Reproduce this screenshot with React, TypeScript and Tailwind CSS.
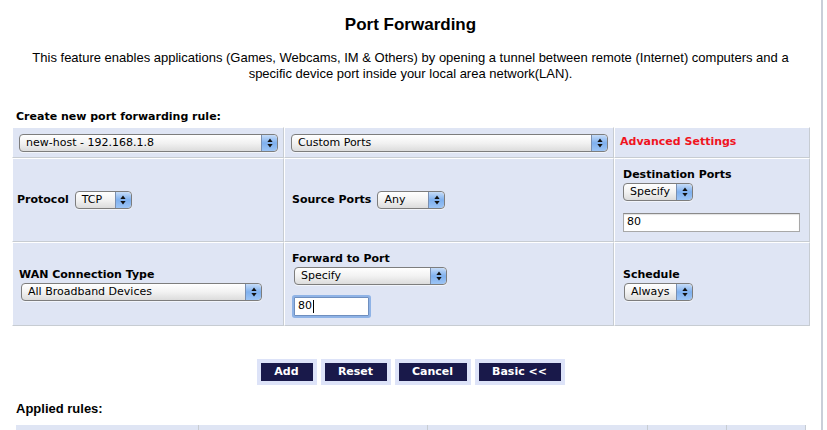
import type { ReactNode } from "react";

const label = "font-['DejaVu_Sans',sans-serif] text-[11px] font-bold text-black";

function Arrows() {
  return (
    <div className="flex h-full w-[16px] shrink-0 items-center justify-center rounded-r-[4px] border-l border-[#7a8fb0] bg-gradient-to-b from-[#c6dcf8] via-[#7fb0ee] to-[#9cc4f5]">
      <svg width="6" height="10" viewBox="0 0 6 10">
        <path d="M3 0.5 L5.6 4 H0.4 Z" fill="#111" />
        <path d="M3 9.5 L5.6 6 H0.4 Z" fill="#111" />
      </svg>
    </div>
  );
}

function Select({ value, w }: { value: string; w: string }) {
  return (
    <div
      className={`flex h-[18px] ${w} items-stretch overflow-hidden rounded-[4px] border border-[#7d7d7d] bg-gradient-to-b from-white via-[#f2f2f2] to-[#dcdcdc] shadow-[0_1px_0_rgba(255,255,255,0.6)]`}
    >
      <div className="flex-1 truncate pl-[6px] font-['DejaVu_Sans',sans-serif] text-[11px] leading-[16px] text-black">
        {value}
      </div>
      <Arrows />
    </div>
  );
}

function Input({ value, w, focus }: { value: string; w: string; focus?: boolean }) {
  return (
    <div
      className={[
        "flex h-[19px] items-center border bg-white pl-[3px] font-['DejaVu_Sans',sans-serif] text-[11px] text-black",
        w,
        focus
          ? "border-[#6f8fbf] shadow-[0_0_0_2px_#8fb3e6] rounded-[1px]"
          : "border-[#a8a8a8] border-t-[#8a8a8a] shadow-[inset_0_1px_1px_rgba(0,0,0,0.12)]",
      ].join(" ")}
    >
      {value}
      {focus && <span className="ml-px h-[13px] w-px bg-black" />}
    </div>
  );
}

function Cell({ children, className = "" }: { children?: ReactNode; className?: string }) {
  return (
    <div
      className={`flex flex-col justify-center border border-b-[#c7ccd2] border-r-[#c7ccd2] border-t-white border-l-white bg-[#dfe5f4] ${className}`}
    >
      {children}
    </div>
  );
}

function Btn({ children, w }: { children: ReactNode; w: string }) {
  return (
    <div className="border-4 border-[#dde3f8] bg-[#dde3f8]">
      <div
        className={`flex h-[18px] ${w} items-center justify-center bg-[#19194a] font-['DejaVu_Sans',sans-serif] text-[11px] font-bold text-white`}
      >
        {children}
      </div>
    </div>
  );
}

export default function App() {
  return (
    <div className="flex h-[430px] w-[827px] overflow-hidden bg-white">
      <div className="w-[821px] shrink-0">
        {/* header */}
        <div className="pt-[14px] text-center font-['Liberation_Sans',sans-serif] text-[17px] font-bold leading-[21px] text-black">
          Port Forwarding
        </div>
        <div className="mt-[15px] text-center font-['Liberation_Sans',sans-serif] text-[13px] leading-[16px] text-black">
          This feature enables applications (Games, Webcams, IM &amp; Others) by opening a tunnel between remote (Internet) computers and a
          <br />
          specific device port inside your local area network(LAN).
        </div>

        <div className={`mt-[28px] pl-[16px] leading-[14px] ${label}`}>Create new port forwarding rule:</div>

        {/* rule table */}
        <div className="ml-[12px] mt-[3px] grid w-[798px] grid-cols-[272px_330px_196px] grid-rows-[31px_84px_84px]">
          <Cell className="pl-[6px]">
            <Select value="new-host - 192.168.1.8" w="w-[259px]" />
          </Cell>
          <Cell className="pl-[6px]">
            <Select value="Custom Ports" w="w-[317px]" />
          </Cell>
          <Cell className="pl-[5px]">
            <span className="font-['DejaVu_Sans',sans-serif] text-[11px] font-bold text-[#f0141e]">Advanced Settings</span>
          </Cell>

          <Cell className="pl-[4px]">
            <div className="flex items-center gap-[6px]">
              <span className={label}>Protocol</span>
              <Select value="TCP" w="w-[57px]" />
            </div>
          </Cell>
          <Cell className="pl-[7px]">
            <div className="flex items-center gap-[6px]">
              <span className={label}>Source Ports</span>
              <Select value="Any" w="w-[68px]" />
            </div>
          </Cell>
          <Cell className="pl-[8px]">
            <div className={`leading-[14px] ${label}`}>Destination Ports</div>
            <div className="mt-[1px]">
              <Select value="Specify" w="w-[70px]" />
            </div>
            <div className="mt-[12px]">
              <Input value="80" w="w-[177px]" />
            </div>
          </Cell>

          <Cell className="pl-[6px]">
            <div className={`leading-[14px] ${label}`}>WAN Connection Type</div>
            <div className="mt-[1px] pl-[2px]">
              <Select value="All Broadband Devices" w="w-[241px]" />
            </div>
          </Cell>
          <Cell className="pl-[7px]">
            <div className={`leading-[14px] ${label}`}>Forward to Port</div>
            <div className="mt-[1px] pl-[2px]">
              <Select value="Specify" w="w-[153px]" />
            </div>
            <div className="mt-[12px] pl-[2px]">
              <Input value="80" w="w-[75px]" focus />
            </div>
          </Cell>
          <Cell className="pl-[8px]">
            <div className={`leading-[14px] ${label}`}>Schedule</div>
            <div className="mt-[1px] pl-[1px]">
              <Select value="Always" w="w-[69px]" />
            </div>
          </Cell>
        </div>

        {/* buttons */}
        <div className="mt-[33px] flex justify-center gap-[4px]">
          <Btn w="w-[52px]">Add</Btn>
          <Btn w="w-[62px]">Reset</Btn>
          <Btn w="w-[68px]">Cancel</Btn>
          <Btn w="w-[82px]">Basic &lt;&lt;</Btn>
        </div>

        <div className="mt-[17px] pl-[16px] font-['Liberation_Sans',sans-serif] text-[13px] font-bold leading-[14px] text-black">
          Applied rules:
        </div>

        <div className="ml-[16px] mt-[9px] grid h-[20px] w-[790px] grid-cols-[183px_229px_220px_79px_79px]">
          <div className="border-r border-[#c7ccd2] bg-[#dfe5f4]" />
          <div className="border-r border-[#c7ccd2] bg-[#dfe5f4]" />
          <div className="border-r border-[#c7ccd2] bg-[#dfe5f4]" />
          <div className="border-r border-[#c7ccd2] bg-[#dfe5f4]" />
          <div className="border-r border-[#c7ccd2] bg-[#dfe5f4]" />
        </div>
      </div>
      <div className="w-[2px] shrink-0 bg-[#c9ced8]" />
    </div>
  );
}
